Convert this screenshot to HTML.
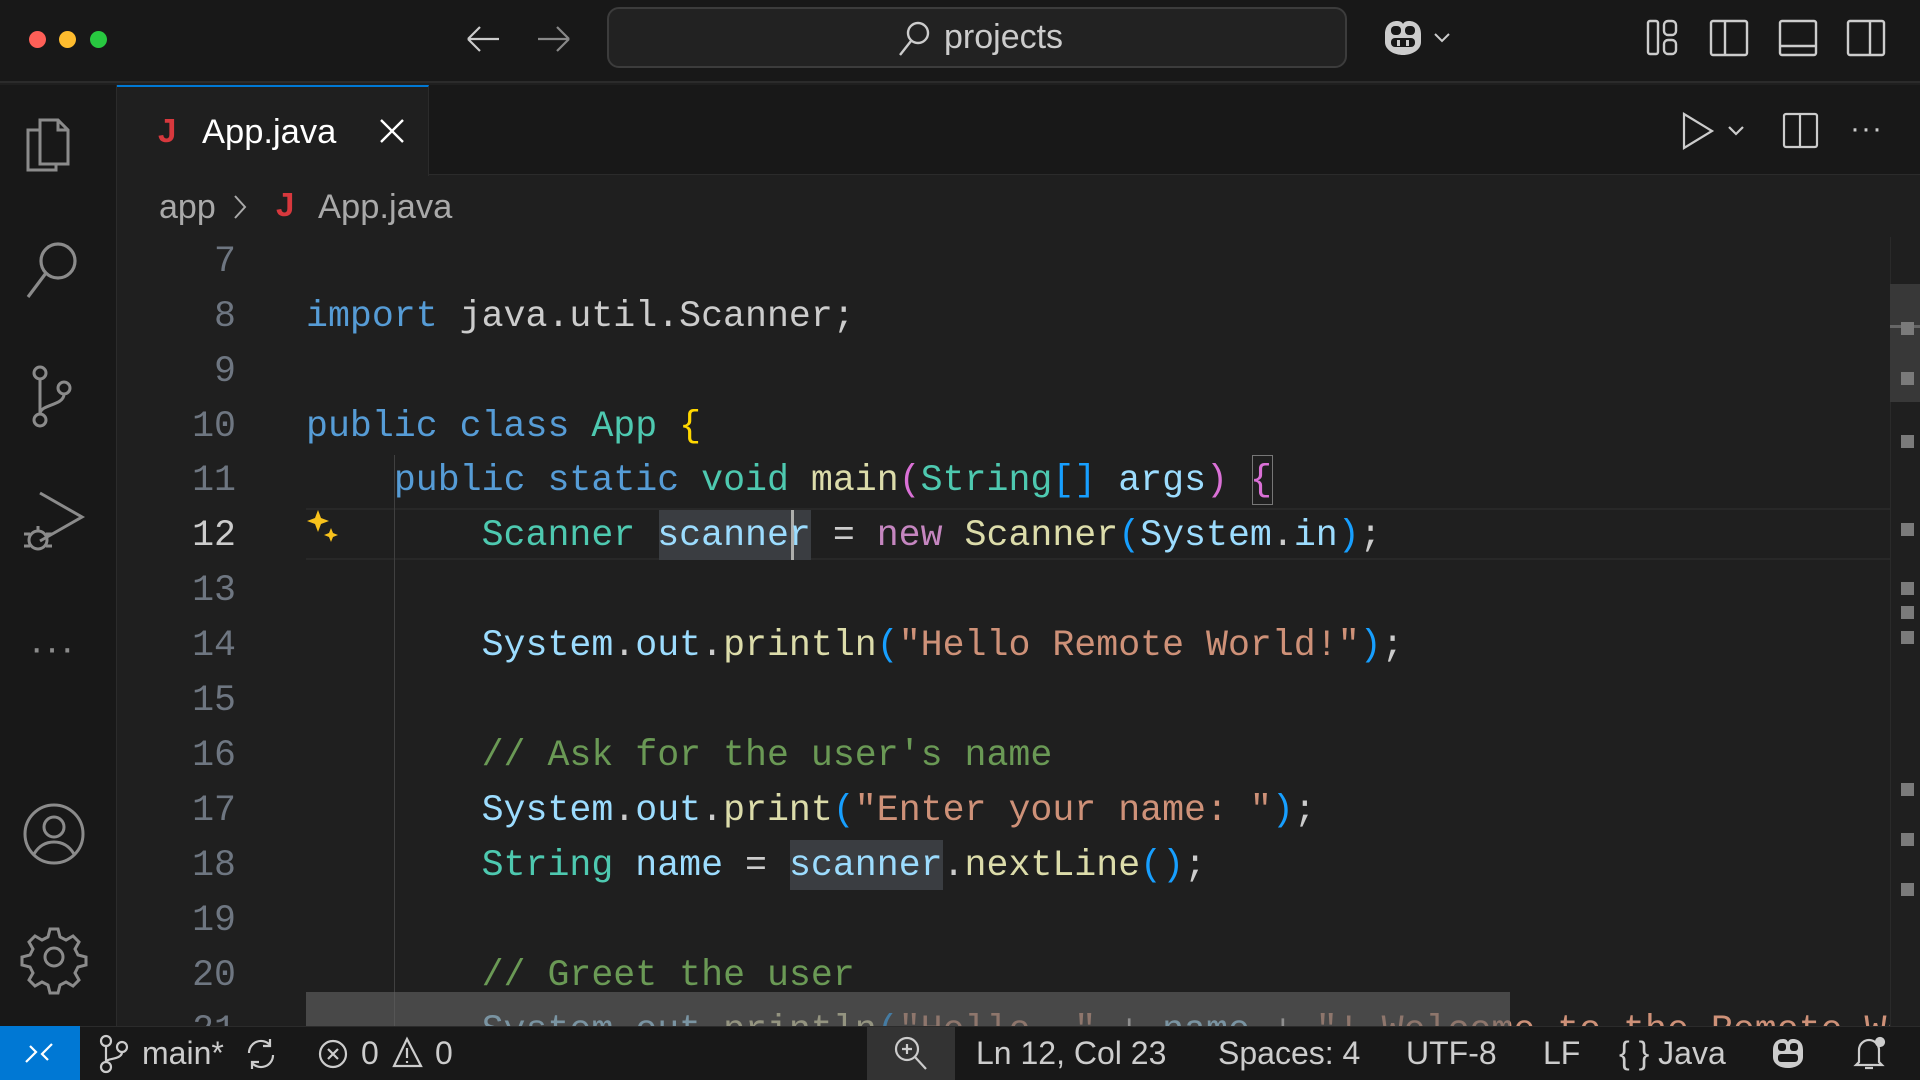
<!DOCTYPE html>
<html><head><meta charset="utf-8"><style>
*{margin:0;padding:0;box-sizing:border-box}
body{width:1920px;height:1080px;overflow:hidden;background:#1f1f1f;font-family:"Liberation Sans",sans-serif;position:relative;color:#ccc}
.abs{position:absolute}
.code{position:absolute;left:306px;font-family:"Liberation Mono",monospace;font-size:36.6px;line-height:55px;white-space:pre;color:#ccc}
.ln{position:absolute;left:150px;width:86px;text-align:right;font-family:"Liberation Mono",monospace;font-size:36.6px;line-height:55px;color:#6e7681}
.k{color:#569cd6}.t{color:#4ec9b0}.f{color:#dcdcaa}.v{color:#9cdcfe}.s{color:#ce9178}.c{color:#6a9955}.y{color:#ffd700}.p{color:#da70d6}.b{color:#179fff}.pk{color:#c586c0}
.st{position:absolute;top:1026px;height:54px;line-height:54px;font-size:32px;color:#ccc}
.mk{position:absolute;left:1901px;width:13px;height:13px;background:#7a7a7a}
</style></head><body>
<!-- title bar -->
<div class="abs" style="left:0;top:0;width:1920px;height:83px;background:#181818;border-bottom:2px solid #2b2b2b"></div>
<div class="abs" style="left:29px;top:31px;width:17px;height:17px;border-radius:50%;background:#fe5f57"></div>
<div class="abs" style="left:59px;top:31px;width:17px;height:17px;border-radius:50%;background:#febc2e"></div>
<div class="abs" style="left:90px;top:31px;width:17px;height:17px;border-radius:50%;background:#28c840"></div>
<svg class="abs" style="left:465px;top:22px" width="110" height="34" fill="none" stroke-width="2.2"><path d="M3 17H34M3 17L15 5M3 17L15 29" stroke="#ccc"/><path d="M104 17H73M104 17L92 5M104 17L92 29" stroke="#888"/></svg>
<div class="abs" style="left:607px;top:7px;width:740px;height:61px;border:2px solid #3c3c3c;border-radius:12px;background:#222"></div>
<svg class="abs" style="left:896px;top:20px" width="36" height="38" fill="none" stroke="#ccc" stroke-width="2.4"><circle cx="22" cy="13" r="10"/><path d="M15 21L4 35"/></svg>
<div class="abs" style="left:944px;top:18px;font-size:34px;color:#ccc">projects</div>
<svg class="abs" style="left:1378px;top:18px" width="80" height="40"><path d="M7 16c0-9 6-13 12-13 3 0 5 1 6 3 1-2 3-3 6-3 6 0 12 4 12 13v8c0 8-9 13-18 13S7 32 7 24z" fill="#ccc"/><rect x="13" y="8" width="10" height="9" rx="4" fill="#181818"/><rect x="27" y="8" width="10" height="9" rx="4" fill="#181818"/><rect x="13" y="20" width="24" height="9" rx="4" fill="#181818"/><rect x="19" y="22" width="3" height="6" fill="#ccc"/><rect x="28" y="22" width="3" height="6" fill="#ccc"/><path d="M57 16l7 7 7-7" stroke="#ccc" stroke-width="2" fill="none"/></svg>
<svg class="abs" style="left:1645px;top:18px" width="260" height="40" fill="none" stroke="#ccc" stroke-width="2.4"><rect x="3" y="3" width="10" height="33" rx="2"/><rect x="19" y="3" width="12" height="14" rx="4"/><rect x="19" y="22" width="12" height="14" rx="4"/><rect x="66" y="3" width="36" height="34" rx="2"/><path d="M80 3V37"/><rect x="135" y="3" width="36" height="34" rx="2"/><path d="M135 28H171"/><rect x="203" y="3" width="36" height="34" rx="2"/><path d="M225 3V37"/></svg>
<!-- activity bar -->
<div class="abs" style="left:0;top:85px;width:117px;height:941px;background:#181818;border-right:1px solid #2b2b2b"></div>
<svg class="abs" style="left:20px;top:110px" width="70" height="70" fill="none" stroke="#8b8b8b" stroke-width="3"><path d="M20 10h18l10 10v34H20z"/><path d="M38 10v10h10"/><path d="M20 20H8v40h28V54"/></svg>
<svg class="abs" style="left:20px;top:235px" width="70" height="70" fill="none" stroke="#8b8b8b" stroke-width="3.2"><circle cx="38" cy="26" r="17"/><path d="M26 38L8 62"/></svg>
<svg class="abs" style="left:20px;top:360px" width="70" height="70" fill="none" stroke="#8b8b8b" stroke-width="3"><circle cx="20" cy="13" r="6"/><circle cx="20" cy="60" r="6"/><circle cx="44" cy="28" r="6"/><path d="M20 19v35M44 34c0 12-24 10-24 20"/></svg>
<svg class="abs" style="left:18px;top:488px" width="72" height="72" fill="none" stroke="#8b8b8b" stroke-width="3"><path d="M22 5l42 24-42 24"/><circle cx="20" cy="52" r="9"/><path d="M6 46h6M6 58h6M28 46h6M28 58h6M20 43v-5"/></svg>
<div class="abs" style="left:30px;top:626px;font-size:40px;color:#8b8b8b;letter-spacing:2px">···</div>
<svg class="abs" style="left:20px;top:802px" width="70" height="70" fill="none" stroke="#8b8b8b" stroke-width="3"><circle cx="34" cy="32" r="29"/><circle cx="34" cy="25" r="10"/><path d="M14 52c6-10 14-12 20-12s14 2 20 12"/></svg>
<svg class="abs" style="left:20px;top:925px" width="70" height="70" fill="none" stroke="#8b8b8b" stroke-width="3"><circle cx="34" cy="32" r="9"/><path d="M30 4h8l2 8 6 3 7-4 6 6-4 7 3 6 8 2v8l-8 2-3 6 4 7-6 6-7-4-6 3-2 8h-8l-2-8-6-3-7 4-6-6 4-7-3-6-8-2v-8l8-2 3-6-4-7 6-6 7 4 6-3z"/></svg>
<!-- tab bar -->
<div class="abs" style="left:117px;top:85px;width:1803px;height:90px;background:#181818;border-bottom:1px solid #2b2b2b"></div>
<div class="abs" style="left:117px;top:85px;width:312px;height:91px;background:#1f1f1f;border-top:2px solid #0078d4;border-right:1px solid #2b2b2b"></div>
<div class="abs" style="left:158px;top:112px;font-size:33px;font-weight:bold;color:#d7383d">J</div>
<div class="abs" style="left:202px;top:113px;font-size:34.5px;color:#fff">App.java</div>
<svg class="abs" style="left:378px;top:117px" width="28" height="28" stroke="#fff" stroke-width="2.4"><path d="M3 3L25 25M25 3L3 25"/></svg>
<svg class="abs" style="left:1678px;top:110px" width="230" height="42" fill="none" stroke="#ccc" stroke-width="2.2"><path d="M6 4l28 17-28 17z"/><path d="M51 17l7 7 7-7"/><rect x="106" y="4" width="33" height="33" rx="2"/><path d="M122 4v33"/></svg>
<div class="abs" style="left:1850px;top:112px;font-size:30px;color:#ccc;letter-spacing:1px">···</div>
<!-- breadcrumbs -->
<div class="abs" style="left:159px;top:188px;font-size:34px;color:#a9a9a9">app</div>
<svg class="abs" style="left:232px;top:193px" width="16" height="28" fill="none" stroke="#a9a9a9" stroke-width="2"><path d="M3 3l10 11-10 11"/></svg>
<div class="abs" style="left:276px;top:186px;font-size:33px;font-weight:bold;color:#d7383d">J</div>
<div class="abs" style="left:318px;top:188px;font-size:34.5px;color:#a9a9a9">App.java</div>
<!-- editor -->
<div class="abs" style="left:306px;top:508px;width:1584px;height:52px;border-top:2px solid #282828;border-bottom:2px solid #282828"></div>
<div class="abs" style="left:394px;top:455px;width:1px;height:571px;background:#404040"></div>
<div class="abs" style="left:659px;top:510px;width:152px;height:50px;background:#3a3d41"></div>
<div class="abs" style="left:790px;top:840px;width:153px;height:50px;background:#3a3d41"></div>
<div class="abs" style="left:1252px;top:455px;width:21px;height:50px;border:1.5px solid #777"></div>
<div class="abs" style="left:791px;top:510px;width:3px;height:50px;background:#aeafad"></div>
<svg class="abs" style="left:306px;top:508px" width="40" height="40"><path d="M12 2l3 8 8 3-8 3-3 8-3-8-8-3 8-3z" fill="#f8c21c"/><path d="M25 20l2 5 5 2-5 2-2 5-2-5-5-2 5-2z" fill="#f8c21c"/></svg>
<div style="position:absolute;left:0;top:1px;width:1890px;height:1025px;overflow:hidden">
<div class="ln" style="top:233px">7</div>
<div class="ln" style="top:288px">8</div>
<div class="ln" style="top:343px">9</div>
<div class="ln" style="top:398px">10</div>
<div class="ln" style="top:452px">11</div>
<div class="ln" style="top:507px;color:#ccc">12</div>
<div class="ln" style="top:562px">13</div>
<div class="ln" style="top:617px">14</div>
<div class="ln" style="top:672px">15</div>
<div class="ln" style="top:727px">16</div>
<div class="ln" style="top:782px">17</div>
<div class="ln" style="top:837px">18</div>
<div class="ln" style="top:892px">19</div>
<div class="ln" style="top:947px">20</div>
<div class="ln" style="top:1002px">21</div>
<div class="code" style="top:288px"><span class="k">import</span> java.util.Scanner;</div>
<div class="code" style="top:398px"><span class="k">public class</span> <span class="t">App</span> <span class="y">{</span></div>
<div class="code" style="top:452px">    <span class="k">public static</span> <span class="t">void</span> <span class="f">main</span><span class="p">(</span><span class="t">String</span><span class="b">[]</span> <span class="v">args</span><span class="p">)</span> <span class="p">{</span></div>
<div class="code" style="top:507px">        <span class="t">Scanner</span> <span class="v">scanner</span> = <span class="pk">new</span> <span class="f">Scanner</span><span class="b">(</span><span class="v">System</span>.<span class="v">in</span><span class="b">)</span>;</div>
<div class="code" style="top:617px">        <span class="v">System</span>.<span class="v">out</span>.<span class="f">println</span><span class="b">(</span><span class="s">"Hello Remote World!"</span><span class="b">)</span>;</div>
<div class="code" style="top:727px">        <span class="c">// Ask for the user's name</span></div>
<div class="code" style="top:782px">        <span class="v">System</span>.<span class="v">out</span>.<span class="f">print</span><span class="b">(</span><span class="s">"Enter your name: "</span><span class="b">)</span>;</div>
<div class="code" style="top:837px">        <span class="t">String</span> <span class="v">name</span> = <span class="v">scanner</span>.<span class="f">nextLine</span><span class="b">()</span>;</div>
<div class="code" style="top:947px">        <span class="c">// Greet the user</span></div>
<div class="code" style="top:1002px">        <span class="v">System</span>.<span class="v">out</span>.<span class="f">println</span><span class="b">(</span><span class="s">"Hello, "</span> + <span class="v">name</span> + <span class="s">"! Welcome to the Remote World!"</span><span class="b">)</span>;</div>
<div class="abs" style="left:306px;top:991px;width:1204px;height:34px;background:rgba(100,100,100,0.6)"></div>
</div>
<!-- scrollbar -->
<div class="abs" style="left:1890px;top:237px;width:1px;height:789px;background:#2a2a2a"></div>
<div class="abs" style="left:1890px;top:284px;width:30px;height:118px;background:#383838"></div>
<div class="abs" style="left:1890px;top:325px;width:30px;height:3px;background:#666"></div>
<div class="mk" style="top:322px"></div><div class="mk" style="top:372px"></div><div class="mk" style="top:435px"></div><div class="mk" style="top:523px"></div><div class="mk" style="top:582px"></div><div class="mk" style="top:606px"></div><div class="mk" style="top:631px"></div><div class="mk" style="top:783px"></div><div class="mk" style="top:833px"></div><div class="mk" style="top:883px"></div>
<!-- status bar -->
<div class="abs" style="left:0;top:1026px;width:1920px;height:54px;background:#181818;border-top:1px solid #2b2b2b"></div>
<div class="abs" style="left:0;top:1026px;width:80px;height:54px;background:#0078d4"></div>
<svg class="abs" style="left:22px;top:1036px" width="36" height="34" fill="none" stroke="#fff" stroke-width="2.2"><path d="M4 26l10-10-6-6M30 8L20 18l6 6"/></svg>
<svg class="abs" style="left:98px;top:1034px" width="34" height="40" fill="none" stroke="#ccc" stroke-width="2.2"><circle cx="8" cy="7" r="5"/><circle cx="8" cy="33" r="5"/><circle cx="24" cy="13" r="5"/><path d="M8 12v16M24 18c0 8-16 6-16 10"/></svg>
<div class="st" style="left:142px">main*</div>
<svg class="abs" style="left:244px;top:1037px" width="34" height="34" fill="none" stroke="#ccc" stroke-width="2.2"><path d="M5 16a12 12 0 0 1 21-8M29 18a12 12 0 0 1-21 8"/><path d="M26 2v7h-7M8 32v-7h7"/></svg>
<svg class="abs" style="left:317px;top:1038px" width="34" height="32" fill="none" stroke="#ccc" stroke-width="2.2"><circle cx="16" cy="16" r="13"/><path d="M11 11l10 10M21 11l-10 10"/></svg>
<div class="st" style="left:361px">0</div>
<svg class="abs" style="left:391px;top:1036px" width="34" height="34" fill="none" stroke="#ccc" stroke-width="2.2"><path d="M16 3L3 30h27z"/><path d="M16 12v10M16 25v2"/></svg>
<div class="st" style="left:435px">0</div>
<div class="abs" style="left:867px;top:1027px;width:88px;height:53px;background:#333"></div>
<svg class="abs" style="left:893px;top:1035px" width="36" height="38" fill="none" stroke="#ccc" stroke-width="2.2"><circle cx="14" cy="14" r="11"/><path d="M14 9v10M9 14h10M22 22l11 12"/></svg>
<div class="st" style="left:976px">Ln 12, Col 23</div>
<div class="st" style="left:1218px">Spaces: 4</div>
<div class="st" style="left:1406px">UTF-8</div>
<div class="st" style="left:1543px">LF</div>
<div class="st" style="left:1619px">{ } Java</div>
<svg class="abs" style="left:1770px;top:1036px" width="40" height="36"><path d="M3 14c0-8 5-11 10-11 3 0 4 1 5 3 1-2 2-3 5-3 5 0 10 3 10 11v7c0 7-7 11-15 11S3 28 3 21z" fill="#ccc"/><rect x="8" y="7" width="8" height="8" rx="3" fill="#181818"/><rect x="20" y="7" width="8" height="8" rx="3" fill="#181818"/><rect x="8" y="18" width="20" height="8" rx="3" fill="#181818"/></svg>
<svg class="abs" style="left:1853px;top:1034px" width="34" height="40" fill="none" stroke="#ccc" stroke-width="2.2"><path d="M6 28V16a10 10 0 0 1 20 0v12l3 3H3z"/><path d="M12 34h8"/><circle cx="27" cy="8" r="4" fill="#ccc"/></svg>
</body></html>
